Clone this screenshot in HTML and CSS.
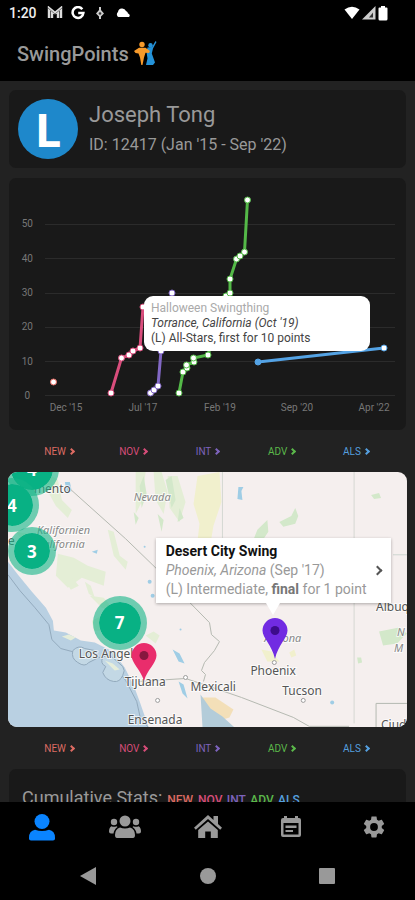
FILE: index.html
```html
<!DOCTYPE html>
<html lang="en">

<head>
    <meta charset="UTF-8">
    <meta name="viewport" content="width=device-width, initial-scale=1.0">
    <title>SwingPoints</title>

    <link rel="stylesheet" href="styles.css">
</head>

<body>
    <!-- Device status bar -->
    <div class="status-bar">
        <span class="clock">1:20</span>
        <svg width="16" height="14" viewBox="0 0 16 14" fill="none" stroke="#ddd">
            <path d="M2 12V2l6 5 6-5v10M5 12V5M11 12V5" stroke-width="2.4" />
            <path d="M1 2l7 6 7-6" stroke="#777" stroke-width="1" />
        </svg>
        <svg class="google" width="14" height="14" viewBox="0 0 14 14" fill="none" stroke="#fff" stroke-width="2.5">
            <path d="M11.3 3.2A5.4 5.4 0 1 0 12.4 7H7.2" />
        </svg>
        <svg class="small-icon" width="10" height="12" viewBox="0 0 10 12" fill="#ccc">
            <path d="M4 0h2v3l3 3.500-3 3V12H4V9.500L1 6.500 4 3z" />
            <circle cx="5" cy="6.500" r="1.300" fill="#333" />
        </svg>
        <svg class="small-icon" width="16" height="10" viewBox="0 0 16 10" fill="#fff">
            <path d="M3.500 9A3 3 0 0 1 3 4a4.200 4.200 0 0 1 8-1 3 3 0 0 1 2 2.500A2 2 0 0 1 14 9z" />
        </svg>
        <span class="spacer"></span>
        <svg width="16" height="14" viewBox="0 0 16 14" fill="#fff">
            <path d="M8 13L.5 3.500Q8-2 15.500 3.500z" />
        </svg>
        <svg width="14" height="14" viewBox="0 0 14 14">
            <path d="M0 13.500L13.500 0v13.500z" fill="#ccc" />
            <path d="M7 11.500L11 6.500v5z" fill="#333" />
        </svg>
        <svg class="battery" width="10" height="15" viewBox="0 0 10 15" fill="#fff">
            <path d="M3 0h4v1.500h1.500a1 1 0 0 1 1 1V13a1.500 1.500 0 0 1-1.500 1.500H2A1.500 1.500 0 0 1 .5 13V2.500a1 1 0 0 1 1-1H3z" />
        </svg>
    </div>

    <header class="app-header">
        <h1>SwingPoints</h1>
        <svg width="23" height="25" viewBox="0 0 23 25">
            <g fill="#2492d8">
                <circle cx="16.500" cy="4.300" r="2.200" />
                <path d="M21.500 0l1 1-3.500 6.500-1.200 5 3.200 9-2 2.500h-7l1.500-6.500-1-6.500 1-4.500 4.500-.5z" />
            </g>
            <g fill="#f79a2b">
                <circle cx="8" cy="3.500" r="2.700" />
                <path d="M5 6.800h6.500L16 10l-1 2-3.500-.2L10 16.500 8.500 24H7.300L6 16.500 4.500 12.500 1.500 12 0 10z" />
            </g>
        </svg>
    </header>

    <main>
        <!-- Dancer card -->
        <section class="card profile">
            <div class="avatar">L</div>
            <div>
                <h2>Joseph Tong</h2>
                <p>ID: 12417 (Jan '15 - Sep '22)</p>
            </div>
        </section>

        <!-- Points over time -->
        <section class="card chart">
            <svg viewBox="0 0 397 252">
                <g class="grid">
                    <path d="M36 46.500h350M36 80.500h350M36 115.500h350M36 149.500h350M36 183.500h350M36 217.500h350" />
                </g>
                <g class="axis y-axis">
                    <text x="24" y="49">50</text>
                    <text x="24" y="84">40</text>
                    <text x="24" y="118">30</text>
                    <text x="24" y="152">20</text>
                    <text x="24" y="187">10</text>
                    <text x="21" y="221">0</text>
                </g>
                <g class="axis x-axis">
                    <text x="57" y="233">Dec '15</text>
                    <text x="134" y="233">Jul '17</text>
                    <text x="211" y="233">Feb '19</text>
                    <text x="288" y="233">Sep '20</text>
                    <text x="365" y="233">Apr '22</text>
                </g>
                <g class="line line-new">
                    <polyline points="44.500,204" />
                </g>
                <g class="line line-nov">
                    <polyline points="102,215 112.500,180 120,177 124,173 131,170 134,129" />
                </g>
                <g class="line line-int">
                    <polyline points="141.500,215 145,212 149,208 152,173 163,115" />
                </g>
                <g class="line line-adv">
                    <polyline points="170,215 174,194 178,190 177.500,187 185,184 184.500,180 199,177 217,118 221,115 221,101 227.500,81 231,78 235.500,74 238.500,22" />
                </g>
                <g class="line line-als">
                    <polyline points="249,184 375,170" />
                </g>
            </svg>
            <div class="chart-tip">
                <span class="event">Halloween Swingthing</span>
                <em>Torrance, California (Oct '19)</em>
                <span>(L) All-Stars, first for 10 points</span>
            </div>
        </section>

        <nav class="divisions">
            <a class="new" href="#new">NEW <i></i></a>
            <a class="nov" href="#nov">NOV <i></i></a>
            <a class="int" href="#int">INT <i></i></a>
            <a class="adv" href="#adv">ADV <i></i></a>
            <a class="als" href="#als">ALS <i></i></a>
        </nav>

        <!-- Events map -->
        <section class="map">
            <svg viewBox="0 0 400 256">
                <rect width="400" height="256" fill="#f5efee" />
                <!-- forests and parks -->
                <g fill="#e4eed6">
                    <path d="M38 0l12 8 4 20 10 10-4 8-12-12-10-18-6-16zM50 82l16 4 14 8 18 6-2 14-22-8-14 10-12-12zM8 60l12 2 14 18-8 6zM100 58l6 2 6 24 8 6-2 8-12-14zM82 124l14 2 10 12-12-2zM84 149l12-6 14 8-6 8-18 0zM128 0h10l-4 30-6 12zM146 0h8l6 20-4 22-8-14zM160 4h10l8 26-6 20-10-14z" />
                    <path d="M138 164l8-4 6 4-4 8zM55 106l8-2 8 10-8 4zM77 110l6 4 4 12-6-4z" />
                </g>
                <g fill="#d3e8ca">
                    <path d="M204 88l16-4 12 4 10-10 8-20 10-10 1 12-8 12-3 20-12 8-22-2-12 4zM272 50l12-6 4-8 3 8-3 8-12 3zM158 8l6-4 4 24-4 8zM132 14l4-10 3 18-5 14zM150 42l6 6-2 12zM126 40l5 6-3 7zM172 36l4 10-6 4z" />
                    <path d="M372 160l20-4 8 6-10 10-14 2zM364 23l8-2 2 5-7 1zM350 186l4 0 1 5-4 1z" />
                </g>
                <g fill="#f1f0cd">
                    <path d="M190 4l22-4 2 30-8 24-4 24-14 8 4-34-6-20zM254 178l10 2 8 10-12 0zM282 181l5-3 2 6-5 2z" />
                </g>
                <path d="M194 226l14 0 18 12-4 8-12 4-14-14z" fill="#f3dfb8" />
                <!-- ocean -->
                <path d="M0 90l10 13 14 17 14 16 7 13 1 10 12 2 15 8 14 2 18 9 12 16 9 18 6 16 9 26H0z" fill="#b9d0e2" />
                <path d="M193 223l10 14 12 8 12 11h-32z" fill="#b3ccd9" />
                <g fill="none" stroke="#93aabd" stroke-width="1">
                    <path d="M0 103l12 16 15 17 14 17 3 15 9 9 15 4 20 3 18 10 12 15 11 21 4 18 8 8" />
                    <path d="M65 179q6-6 12-2l10 2q4 3 2 8l-8 4q-4 5-11 0-7-4-5-12zM95 186q6-5 11 1l9 8q3 4 0 9-3 7-9 6-8-1-11-9l3-6q-6-3-3-9z" fill="#c3d8e5" />
                </g>
                <path d="M54 165l7-2 7 3-5 3zM97 189l8 3 7 6-5 1z" fill="#e5edda" />
                <!-- lakes -->
                <g fill="#9fcde5">
                    <path d="M57 10h5l2 9-5 3zM165 178l7 4 5 10-6-2zM171 210l5 3 4 14-5-5zM303 84l-1 6-5 5-3 3 4 2-9-2 1-3 7-4zM231 15h5l-2 4 1 9-5-1z" />
                    <path d="M84 80l6-2-1 4z" />
                    <circle cx="142" cy="110" r="2" /><circle cx="145" cy="124" r="2" /><circle cx="137" cy="75" r="1" />
                    <circle cx="173" cy="158" r="1" /><circle cx="325" cy="231" r="2" />
                </g>
                <!-- borders -->
                <g fill="none" stroke="#b5b9b1" stroke-width="1">
                    <path d="M60 15l58 52 31 30 53 54 2 12 8 7-5 9-10 12-3 8 4 4-2 7M131 210l47-3 21 7 35 12 52 20 16 9h40" />
                    <path d="M215 0v66M347 0v252" stroke="#d5d8d3" />
                    <path d="M386 83h14" stroke="#cdd5d0" />
                    <path d="M369 256v-24h31" />
                </g>
                <g fill="#fff" stroke="#9b9b9b">
                    <circle cx="178" cy="206" r="2" /><circle cx="150" cy="229" r="2" /><circle cx="267" cy="191" r="2" /><circle cx="296" cy="229" r="2" />
                </g>
                <g class="place">
                    <text x="26" y="21">mento</text>
                    <text x="0" y="73">e</text>
                    <text x="71" y="186">Los Angeles</text>
                    <text x="117" y="215">Tijuana</text>
                    <text x="183" y="220">Mexicali</text>
                    <text x="120" y="253">Ensenada</text>
                    <text x="243" y="204">Phoenix</text>
                    <text x="275" y="224">Tucson</text>
                    <text x="369" y="139">Albuque</text>
                    <text x="374" y="258">Ciudad</text>
                </g>
                <g class="place state">
                    <text x="126" y="29">Nevada</text>
                    <text x="29" y="62">Kalifornien</text>
                    <text x="29" y="76">California</text>
                    <text x="257" y="170">Arizona</text>
                    <text x="390" y="164">N</text>
                    <text x="387" y="180">M</text>
                </g>
            </svg>
            <button class="cluster cluster-north" type="button">4</button>
            <button class="cluster cluster-bay" type="button">4</button>
            <button class="cluster cluster-coast" type="button">3</button>
            <button class="cluster cluster-la" type="button">7</button>
            <button class="pin pin-nov" type="button" aria-label="San Diego">
                <svg viewBox="0 0 26 39">
                    <path d="M13 0a12.500 12.500 0 0 1 12.500 12.500C25.500 20 16 27 13 38 10 27 .5 20 .5 12.500A12.500 12.500 0 0 1 13 0z" fill="#e92d6c" />
                    <circle cx="13" cy="12.500" r="4.500" fill="#87173f" />
                </svg>
            </button>
            <button class="pin pin-int" type="button" aria-label="Phoenix">
                <svg viewBox="0 0 26 42">
                    <path d="M13 0a12.500 12.500 0 0 1 12.500 12.500C25.500 20 16 27 13 41 10 27 .5 20 .5 12.500A12.500 12.500 0 0 1 13 0z" fill="#712be2" />
                    <circle cx="13" cy="12.500" r="4.500" fill="#3d0c8b" />
                </svg>
            </button>
            <a class="callout" href="#desert-city-swing">
                <span>
                    <strong>Desert City Swing</strong>
                    <span class="where"><em>Phoenix, Arizona</em> (Sep '17)</span>
                    <span class="result">(L) Intermediate, <b>final</b> for 1 point</span>
                </span>
                <i></i>
            </a>
        </section>

        <nav class="divisions">
            <a class="new" href="#new">NEW <i></i></a>
            <a class="nov" href="#nov">NOV <i></i></a>
            <a class="int" href="#int">INT <i></i></a>
            <a class="adv" href="#adv">ADV <i></i></a>
            <a class="als" href="#als">ALS <i></i></a>
        </nav>

        <section class="card stats">
            <h3>Cumulative Stats:</h3>
            <p><span class="new">NEW,</span> <span class="nov">NOV,</span> <span class="int">INT,</span> <span class="adv">ADV,</span> <span class="als">ALS</span></p>
        </section>
    </main>

    <!-- App tabs -->
    <nav class="tabs">
        <a class="active" href="#profile" aria-label="Profile">
            <svg width="26" height="27" viewBox="0 0 26 27">
                <circle cx="13" cy="7.500" r="7.500" />
                <path d="M6 15.800q7 2.500 14 0 6 1 6 8v1q0 1.700-2 1.700H2q-2 0-2-1.700v-1q0-7 6-8z" />
            </svg>
        </a>
        <a href="#dancers" aria-label="Dancers">
            <svg width="32" height="24" viewBox="0 0 32 24">
                <circle cx="16" cy="6" r="5.500" /><circle cx="5" cy="7" r="3.200" /><circle cx="27" cy="7" r="3.200" />
                <path d="M11 12.500q5 2 10 0 5 1.500 5 7.500 0 3-2 3H8q-2 0-2-3 0-6 5-7.500zM2.500 11.300q2.500 1 5 0l1 .7q-3.500 2.500-4 6.500H2q-2 0-2-2 0-4 2.500-5.200zM29.500 11.300q-2.500 1-5 0l-1 .7q3.500 2.500 4 6.500H30q2 0 2-2 0-4-2.500-5.200z" />
            </svg>
        </a>
        <a href="#home" aria-label="Home">
            <svg width="28" height="24" viewBox="0 0 28 24">
                <path d="M14 0l5.500 5V1H24v8l4 3.700-1.800 2L14 4 1.800 14.700 0 12.700z" />
                <path d="M14 6.500l9.800 8.500v8h-7v-6.500h-5.600V23h-7v-8z" />
            </svg>
        </a>
        <a href="#events" aria-label="Events">
            <svg width="22" height="24" viewBox="0 0 22 24">
                <path fill-rule="evenodd" d="M4 1h3v2h8V1h3v2h1q2 0 2 2v15q0 2-2 2H3q-2 0-2-2V5q0-2 2-2h1zM3.500 8v11.500h15V8zM5.500 10.500h11V13h-11zM5.500 15H13v2H5.500z" />
            </svg>
        </a>
        <a href="#settings" aria-label="Settings">
            <svg width="26" height="26" viewBox="0 0 24 24">
                <path d="M19.140 12.940c.040-.3.060-.610.060-.940 0-.320-.020-.640-.070-.940l2.030-1.580c.180-.140.230-.410.120-.610l-1.920-3.320c-.120-.220-.370-.290-.590-.220l-2.390.960c-.5-.380-1.030-.7-1.620-.940l-.360-2.540c-.040-.240-.240-.410-.480-.410h-3.840c-.240 0-.430.170-.470.410l-.360 2.540c-.590.240-1.130.570-1.620.940l-2.390-.960c-.220-.080-.470 0-.590.220L2.740 8.870c-.120.210-.080.470.120.610l2.030 1.580c-.050.3-.090.630-.090.940s.020.640.070.940l-2.030 1.580c-.180.140-.230.410-.120.610l1.920 3.320c.120.220.370.290.590.220l2.390-.960c.5.380 1.030.7 1.620.940l.360 2.540c.050.240.240.410.480.410h3.840c.240 0 .440-.170.470-.410l.360-2.540c.590-.240 1.130-.560 1.620-.940l2.390.960c.220.080.470 0 .590-.220l1.920-3.320c.120-.220.070-.470-.120-.610zM12 15.600a3.600 3.600 0 1 1 0-7.200 3.600 3.600 0 0 1 0 7.200z" />
            </svg>
        </a>
    </nav>

    <!-- Device buttons -->
    <div class="system-nav">
        <button type="button" aria-label="Back"><svg width="16" height="18" viewBox="0 0 16 18"><path d="M16 0v18L0 9z" /></svg></button>
        <button type="button" aria-label="Home screen"><svg width="16" height="18" viewBox="0 0 16 18"><circle cx="8" cy="9" r="8" /></svg></button>
        <button type="button" aria-label="Recent apps"><svg width="16" height="18" viewBox="0 0 16 18"><rect y="1" width="16" height="16" rx="1" /></svg></button>
    </div>

    <script>
        // Add a dot at each vertex of the chart lines
        document.querySelectorAll('.line').forEach((line) => {
            let points = line.querySelector('polyline').points;
            for (let point of points) {
                let dot = document.createElementNS('http://www.w3.org/2000/svg', 'circle');
                dot.setAttribute('cx', point.x);
                dot.setAttribute('cy', point.y);
                dot.setAttribute('r', 3);
                line.appendChild(dot);
            }
        });
    </script>
</body>

</html>
```
FILE: styles.css
```css
* {
    box-sizing: border-box;
}

body {
    display: flex;
    flex-direction: column;
    height: 100vh;
    margin: 0;
    overflow: hidden;
    font-family: Roboto, sans-serif;
    color: #999;
    background-color: #000;
}

h1,
h2,
h3,
p {
    margin: 0;
    font-weight: 400;
}

a {
    color: inherit;
    text-decoration: none;
}

button {
    padding: 0;
    border: 0;
    font: inherit;
    background: none;
    cursor: pointer;
}

svg {
    display: block;
}

/* Top bars */
.status-bar {
    display: flex;
    align-items: center;
    gap: 8px;
    height: 26px;
    padding: 0 27px 0 9px;
    color: #eee;
}

.clock {
    margin-right: 2px;
    font-size: 14px;
    font-weight: 500;
}

.small-icon {
    margin-left: 2px;
}

.spacer {
    flex: 1;
}

.status-bar .spacer ~ svg {
    margin-left: -6px;
}

.status-bar .battery {
    margin-left: 0;
}

.app-header {
    display: flex;
    align-items: center;
    gap: 5px;
    height: 55px;
    padding: 0 17px;
}

.app-header h1 {
    font-size: 20px;
    font-weight: 500;
}

/* Content */
main {
    flex: 1;
    min-height: 0;
    padding: 9px 9px 0;
    overflow: hidden;
    background-color: #222;
}

.card {
    border-radius: 7px;
    background-color: #191919;
}

.profile {
    display: flex;
    align-items: center;
    gap: 11px;
    height: 78px;
    margin-bottom: 10px;
    padding: 0 9px;
}

.avatar {
    width: 60px;
    height: 60px;
    border-radius: 50%;
    font: 700 47px/60px "Open Sans", sans-serif;
    text-align: center;
    color: #fff;
    background-color: #1e88cb;
}

.profile h2 {
    font-size: 22px;
    line-height: 32px;
}

.profile p {
    font-size: 16px;
    line-height: 28px;
}

/* Chart */
.chart {
    position: relative;
}

.grid {
    stroke: #2b2b2b;
}

.axis {
    font-size: 10px;
    fill: #777;
}

.y-axis {
    text-anchor: end;
}

.x-axis {
    text-anchor: middle;
}

.line {
    fill: #fff;
    stroke-width: 1;
}

.line polyline {
    fill: none;
    stroke-width: 3;
}

.line-new {
    stroke: #e66a62;
}

.line-nov {
    stroke: #d94d7c;
}

.line-int {
    stroke: #8268c5;
}

.line-adv {
    stroke: #54b948;
}

.line-als {
    stroke: #54a3e5;
}

.line-als circle:first-of-type {
    fill: #54a3e5;
}

.chart-tip {
    position: absolute;
    top: 47%;
    left: 34%;
    width: 57%;
    padding: 5px 7px;
    border-radius: 9px;
    font-size: 12px;
    line-height: 15px;
    color: #444;
    background-color: #fff;
}

.chart-tip > * {
    display: block;
}

.chart-tip .event {
    color: #aaa;
}

/* Division links */
.divisions {
    display: flex;
    height: 42px;
    padding: 0 13px;
    font-size: 10px;
}

.divisions a {
    display: flex;
    flex: 1;
    align-items: center;
    justify-content: center;
    gap: 3px;
}

.divisions i,
.callout i {
    width: 5px;
    height: 5px;
    border: solid;
    border-width: 2px 2px 0 0;
    transform: rotate(45deg);
}

.new {
    color: #dc6b62;
}

.nov {
    color: #d64d79;
}

.int {
    color: #7d63bc;
}

.adv {
    color: #5bb84a;
}

.als {
    color: #559fdf;
}

/* Map */
.map {
    position: relative;
    margin: 0 -1px;
    border-radius: 9px;
    overflow: hidden;
}

.place {
    font: 12px "Noto Sans", sans-serif;
    fill: #555;
    stroke: #fff;
    stroke-width: 2px;
    stroke-opacity: 0.7;
    paint-order: stroke;
}

.state {
    font-size: 11px;
    font-style: italic;
    fill: #888;
}

.cluster {
    position: absolute;
    width: 54px;
    height: 54px;
    border: 6px solid rgba(20, 180, 135, 0.6);
    border-radius: 50%;
    font: 700 17px "Open Sans", sans-serif;
    color: #fff;
    background-color: #08b184;
    background-clip: padding-box;
    transform: translate(-50%, -50%);
}

.cluster-north {
    top: -1%;
    left: 6%;
}

.cluster-bay {
    top: 13%;
    left: 1%;
}

.cluster-coast {
    top: 31%;
    left: 6%;
    width: 48px;
    height: 48px;
}

.cluster-la {
    top: 59%;
    left: 28%;
}

.pin {
    position: absolute;
    width: 26px;
    transform: translateX(-50%);
}

.pin-nov {
    top: 67%;
    left: 34%;
}

.pin-int {
    top: 57%;
    left: 67%;
}

.callout {
    position: absolute;
    top: 26%;
    right: 4%;
    display: flex;
    align-items: center;
    justify-content: space-between;
    width: 59%;
    padding: 4px 10px;
    font-size: 14px;
    line-height: 19px;
    color: #999;
    background-color: #fff;
    box-shadow: 0 1px 3px rgba(0, 0, 0, 0.3);
}

.callout::after {
    content: "";
    position: absolute;
    top: 100%;
    left: 50%;
    border: solid transparent;
    border-width: 12px 7px 0;
    border-top-color: #fff;
    transform: translateX(-50%);
}

.callout strong,
.callout .where,
.callout .result {
    display: block;
    white-space: nowrap;
}

.callout strong {
    font-weight: 700;
    color: #111;
}

.callout b {
    color: #777;
}

.callout i {
    width: 7px;
    height: 7px;
    color: #555;
}

/* Stats */
.stats {
    display: flex;
    align-items: baseline;
    gap: 5px;
    padding: 17px 13px;
}

.stats h3 {
    font-size: 18px;
    line-height: 24px;
}

.stats p {
    font-size: 12px;
    font-weight: 500;
}

/* Bottom bars */
.tabs {
    display: flex;
    height: 50px;
    fill: #999;
}

.tabs a {
    display: flex;
    flex: 1;
    align-items: center;
    justify-content: center;
}

.tabs .active {
    fill: #0a84ff;
}

.system-nav {
    display: flex;
    justify-content: space-between;
    height: 48px;
    padding: 0 80px;
    fill: #999;
}
```
